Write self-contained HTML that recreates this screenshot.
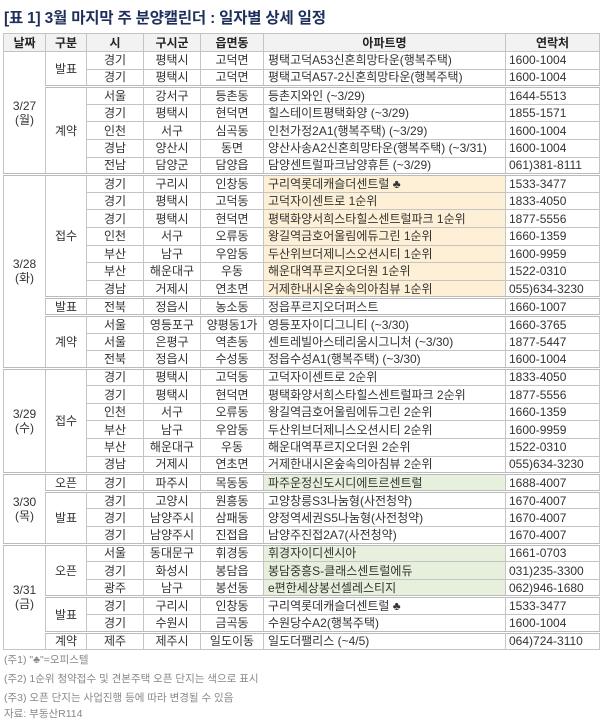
<!DOCTYPE html>
<html><head><meta charset="utf-8">
<style>
html,body{margin:0;padding:0;background:#fff;width:600px;height:719px;overflow:hidden}
body{font-family:"Liberation Sans","Noto Sans CJK KR",sans-serif;color:#333}
.t{position:absolute;left:4px;top:6px;font-size:15.5px;font-weight:bold;color:#1f2f5c;letter-spacing:-0.2px}
table{position:absolute;left:3px;top:33px;border-collapse:collapse;table-layout:fixed;width:596px;font-size:12px}
td,th{border:1px solid #c4c4c4;padding:0;text-align:center;white-space:nowrap;overflow:hidden;line-height:14px}
th{background:#f2f2f2;font-weight:bold;height:17px;color:#222}
tr{height:17.6px}
td.a{text-align:left;padding-left:4px}
td.p{text-align:left;padding-left:3px}
.y{background:#fdf0d6}
.gr{background:#e6f0dc}
tr.g td{border-top:3px double #bbb}
.f{position:absolute;left:4px;font-size:10.5px;color:#888}
</style></head><body>
<div class="t">[표 1] 3월 마지막 주 분양캘린더 : 일자별 상세 일정</div>
<table>
<colgroup><col style="width:42px"><col style="width:41px"><col style="width:57px"><col style="width:57px"><col style="width:63px"><col style="width:242px"><col style="width:94px"></colgroup>
<tr><th>날짜</th><th>구분</th><th>시</th><th>구시군</th><th>읍면동</th><th>아파트명</th><th>연락처</th></tr>
<tr><td rowspan="7">3/27<br>(월)</td><td rowspan="2">발표</td><td>경기</td><td>평택시</td><td>고덕면</td><td class="a">평택고덕A53신혼희망타운(행복주택)</td><td class="p">1600-1004</td></tr>
<tr><td>경기</td><td>평택시</td><td>고덕면</td><td class="a">평택고덕A57-2신혼희망타운(행복주택)</td><td class="p">1600-1004</td></tr>
<tr class="g"><td rowspan="5">계약</td><td>서울</td><td>강서구</td><td>등촌동</td><td class="a">등촌지와인 (~3/29)</td><td class="p">1644-5513</td></tr>
<tr><td>경기</td><td>평택시</td><td>현덕면</td><td class="a">힐스테이트평택화양 (~3/29)</td><td class="p">1855-1571</td></tr>
<tr><td>인천</td><td>서구</td><td>심곡동</td><td class="a">인천가정2A1(행복주택) (~3/29)</td><td class="p">1600-1004</td></tr>
<tr><td>경남</td><td>양산시</td><td>동면</td><td class="a">양산사송A2신혼희망타운(행복주택) (~3/31)</td><td class="p">1600-1004</td></tr>
<tr><td>전남</td><td>담양군</td><td>담양읍</td><td class="a">담양센트럴파크남양휴튼 (~3/29)</td><td class="p">061)381-8111</td></tr>

<tr class="g"><td rowspan="11">3/28<br>(화)</td><td rowspan="7">접수</td><td>경기</td><td>구리시</td><td>인창동</td><td class="a y">구리역롯데캐슬더센트럴 ♣</td><td class="p">1533-3477</td></tr>
<tr><td>경기</td><td>평택시</td><td>고덕동</td><td class="a y">고덕자이센트로 1순위</td><td class="p">1833-4050</td></tr>
<tr><td>경기</td><td>평택시</td><td>현덕면</td><td class="a y">평택화양서희스타힐스센트럴파크 1순위</td><td class="p">1877-5556</td></tr>
<tr><td>인천</td><td>서구</td><td>오류동</td><td class="a y">왕길역금호어울림에듀그린 1순위</td><td class="p">1660-1359</td></tr>
<tr><td>부산</td><td>남구</td><td>우암동</td><td class="a y">두산위브더제니스오션시티 1순위</td><td class="p">1600-9959</td></tr>
<tr><td>부산</td><td>해운대구</td><td>우동</td><td class="a y">해운대역푸르지오더원 1순위</td><td class="p">1522-0310</td></tr>
<tr><td>경남</td><td>거제시</td><td>연초면</td><td class="a y">거제한내시온숲속의아침뷰 1순위</td><td class="p">055)634-3230</td></tr>
<tr class="g"><td>발표</td><td>전북</td><td>정읍시</td><td>농소동</td><td class="a">정읍푸르지오더퍼스트</td><td class="p">1660-1007</td></tr>
<tr class="g"><td rowspan="3">계약</td><td>서울</td><td>영등포구</td><td>양평동1가</td><td class="a">영등포자이디그니티 (~3/30)</td><td class="p">1660-3765</td></tr>
<tr><td>서울</td><td>은평구</td><td>역촌동</td><td class="a">센트레빌아스테리움시그니처 (~3/30)</td><td class="p">1877-5447</td></tr>
<tr><td>전북</td><td>정읍시</td><td>수성동</td><td class="a">정읍수성A1(행복주택) (~3/30)</td><td class="p">1600-1004</td></tr>

<tr class="g"><td rowspan="6">3/29<br>(수)</td><td rowspan="6">접수</td><td>경기</td><td>평택시</td><td>고덕동</td><td class="a">고덕자이센트로 2순위</td><td class="p">1833-4050</td></tr>
<tr><td>경기</td><td>평택시</td><td>현덕면</td><td class="a">평택화양서희스타힐스센트럴파크 2순위</td><td class="p">1877-5556</td></tr>
<tr><td>인천</td><td>서구</td><td>오류동</td><td class="a">왕길역금호어울림에듀그린 2순위</td><td class="p">1660-1359</td></tr>
<tr><td>부산</td><td>남구</td><td>우암동</td><td class="a">두산위브더제니스오션시티 2순위</td><td class="p">1600-9959</td></tr>
<tr><td>부산</td><td>해운대구</td><td>우동</td><td class="a">해운대역푸르지오더원 2순위</td><td class="p">1522-0310</td></tr>
<tr><td>경남</td><td>거제시</td><td>연초면</td><td class="a">거제한내시온숲속의아침뷰 2순위</td><td class="p">055)634-3230</td></tr>

<tr class="g"><td rowspan="4">3/30<br>(목)</td><td>오픈</td><td>경기</td><td>파주시</td><td>목동동</td><td class="a gr">파주운정신도시디에트르센트럴</td><td class="p">1688-4007</td></tr>
<tr class="g"><td rowspan="3">발표</td><td>경기</td><td>고양시</td><td>원흥동</td><td class="a">고양창릉S3나눔형(사전청약)</td><td class="p">1670-4007</td></tr>
<tr><td>경기</td><td>남양주시</td><td>삼패동</td><td class="a">양정역세권S5나눔형(사전청약)</td><td class="p">1670-4007</td></tr>
<tr><td>경기</td><td>남양주시</td><td>진접읍</td><td class="a">남양주진접2A7(사전청약)</td><td class="p">1670-4007</td></tr>

<tr class="g"><td rowspan="6">3/31<br>(금)</td><td rowspan="3">오픈</td><td>서울</td><td>동대문구</td><td>휘경동</td><td class="a gr">휘경자이디센시아</td><td class="p">1661-0703</td></tr>
<tr><td>경기</td><td>화성시</td><td>봉담읍</td><td class="a gr">봉담중흥S-클래스센트럴에듀</td><td class="p">031)235-3300</td></tr>
<tr><td>광주</td><td>남구</td><td>봉선동</td><td class="a gr">e편한세상봉선셀레스티지</td><td class="p">062)946-1680</td></tr>
<tr class="g"><td rowspan="2">발표</td><td>경기</td><td>구리시</td><td>인창동</td><td class="a">구리역롯데캐슬더센트럴 ♣</td><td class="p">1533-3477</td></tr>
<tr><td>경기</td><td>수원시</td><td>금곡동</td><td class="a">수원당수A2(행복주택)</td><td class="p">1600-1004</td></tr>
<tr class="g"><td>계약</td><td>제주</td><td>제주시</td><td>일도이동</td><td class="a">일도더팰리스 (~4/5)</td><td class="p">064)724-3110</td></tr>
</table>
<div class="f" style="top:652px">(주1) "♣"=오피스텔</div>
<div class="f" style="top:671px">(주2) 1순위 청약접수 및 견본주택 오픈 단지는 색으로 표시</div>
<div class="f" style="top:690px">(주3) 오픈 단지는 사업진행 등에 따라 변경될 수 있음</div>
<div class="f" style="top:706px">자료: 부동산R114</div>
</body></html>
